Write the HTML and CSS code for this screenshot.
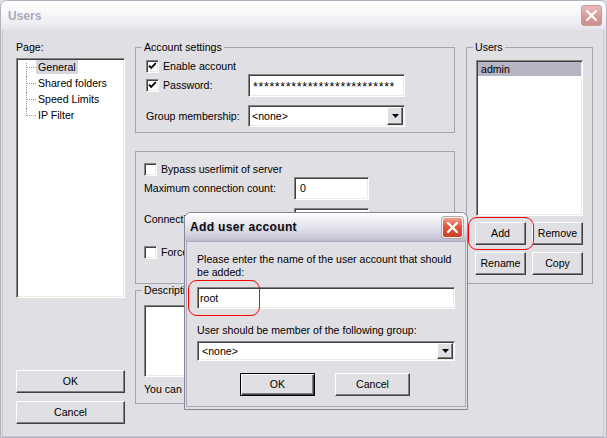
FILE: index.html
```html
<!DOCTYPE html>
<html>
<head>
<meta charset="utf-8">
<title>Users</title>
<link rel="stylesheet" href="styles.css">
</head>
<body>
<div class="win">
  <div class="titlebar">
    <span class="title">Users</span>
    <span class="xbtn xbtn-inactive"><svg width="21" height="21" viewBox="0 0 21 21"><path d="M6 6 L15 15 M15 6 L6 15" stroke="#fff" stroke-width="2.2" stroke-linecap="round"/></svg></span>
  </div>
  <div class="client">
    <div class="col-left">
      <div class="label">Page:</div>
      <div class="tree">
        <div class="node first"><span class="conn"></span><span class="node-text sel">General</span></div>
        <div class="node"><span class="conn"></span><span class="node-text">Shared folders</span></div>
        <div class="node"><span class="conn"></span><span class="node-text">Speed Limits</span></div>
        <div class="node last"><span class="conn"></span><span class="node-text">IP Filter</span></div>
      </div>
      <button class="btn btn-left btn-ok">OK</button>
      <button class="btn btn-left btn-cancel">Cancel</button>
    </div>

    <div class="col-mid">
      <fieldset class="grp g-account">
        <legend>Account settings</legend>
        <div class="grp-in acc-in">
          <div class="row r-enable">
            <span class="chk"><svg width="11" height="11" viewBox="0 0 11 11"><polyline points="2,4.6 4.2,6.8 8.8,2.2" fill="none" stroke="#000" stroke-width="1.9"/></svg></span>
            <span class="chk-text">Enable account</span>
          </div>
          <div class="row r-pass">
            <span class="lblcol">
              <span class="chk"><svg width="11" height="11" viewBox="0 0 11 11"><polyline points="2,4.6 4.2,6.8 8.8,2.2" fill="none" stroke="#000" stroke-width="1.9"/></svg></span>
              <span class="chk-text">Password:</span>
            </span>
            <span class="edit pw">**************************</span>
          </div>
          <div class="row r-group">
            <span class="lblcol">Group membership:</span>
            <span class="combo acc-combo"><span class="combo-text">&lt;none&gt;</span><span class="drop"><svg width="7" height="4" viewBox="0 0 7 4"><polygon points="0,0 7,0 3.5,4" fill="#000"/></svg></span></span>
          </div>
        </div>
      </fieldset>

      <div class="grp g-conn">
        <div class="grp-in conn-in">
          <div class="row r-bypass">
            <span class="chk"></span>
            <span class="chk-text">Bypass userlimit of server</span>
          </div>
          <div class="row r-max">
            <span class="lblcol2">Maximum connection count:</span>
            <span class="edit num">0</span>
          </div>
          <div class="row r-ip">
            <span class="lblcol2">Connection limit per IP:</span>
            <span class="edit num">0</span>
          </div>
          <div class="row r-force">
            <span class="chk"></span>
            <span class="chk-text">Force SSL for user login</span>
          </div>
        </div>
      </div>

      <fieldset class="grp g-desc">
        <legend>Description</legend>
        <div class="grp-in desc-in">
          <div class="memo"></div>
          <div class="desc-note">You can enter some comments about the user</div>
        </div>
      </fieldset>
    </div>

    <div class="col-right">
      <fieldset class="grp g-users">
        <legend>Users</legend>
        <div class="grp-in users-in">
          <div class="listbox">
            <div class="list-item sel-row">admin</div>
          </div>
          <div class="btn-row first-row">
            <button class="btn btn-small">Add</button>
            <button class="btn btn-small">Remove</button>
          </div>
          <div class="btn-row">
            <button class="btn btn-small">Rename</button>
            <button class="btn btn-small">Copy</button>
          </div>
        </div>
      </fieldset>
    </div>
  </div>
</div>

<div class="dlg">
  <div class="dlg-title">
    <span class="dlg-caption">Add user account</span>
    <span class="xbtn xbtn-active"><svg width="21" height="21" viewBox="0 0 21 21"><path d="M6 6 L15 15 M15 6 L6 15" stroke="#fff" stroke-width="2.4" stroke-linecap="round"/></svg></span>
  </div>
  <div class="dlg-body">
    <p class="dlg-text">Please enter the name of the user account that should be added:</p>
    <div class="edit dlg-edit">root</div>
    <p class="dlg-text2">User should be member of the following group:</p>
    <div class="combo dlg-combo"><span class="combo-text">&lt;none&gt;</span><span class="drop"><svg width="7" height="4" viewBox="0 0 7 4"><polygon points="0,0 7,0 3.5,4" fill="#000"/></svg></span></div>
    <div class="dlg-buttons">
      <button class="btn btn-dlg btn-default">OK</button>
      <button class="btn btn-dlg">Cancel</button>
    </div>
  </div>
</div>

<div class="hl hl-add"></div>
<div class="hl hl-root"></div>
</body>
</html>
```

FILE: styles.css
```css
html, body {
  margin: 0;
  padding: 0;
}
body {
  position: relative;
  width: 607px;
  height: 438px;
  overflow: hidden;
  font: 10.6px/13px "Liberation Sans", Arial, sans-serif;
  color: #000;
  background: #e0dfe3;
}

.win {
  width: 607px;
  height: 438px;
  box-sizing: border-box;
  border: 1px solid #b3b2c0;
  border-radius: 7px 7px 0 0;
  background: #e0dfe3;
  display: flex;
  flex-direction: column;
  overflow: hidden;
}

.titlebar {
  height: 29px;
  flex: none;
  display: flex;
  align-items: center;
  padding: 0 4px 0 7px;
  background: linear-gradient(#ffffff, #f7f7f9 45%, #ebebf0 85%, #e3e3e9);
}
.title {
  flex: 1;
  font: bold 12px "Liberation Sans", Arial, sans-serif;
  color: #aaa9b7;
}

.xbtn {
  width: 21px;
  height: 21px;
  box-sizing: border-box;
  border-radius: 3px;
  display: flex;
  align-items: center;
  justify-content: center;
  overflow: hidden;
}
.xbtn svg { display: block; flex: none; }
.xbtn-inactive {
  background: linear-gradient(#ebbcbc, #d99a9a 55%, #cf8d8d);
  border: 1px solid #c99a9a;
}
.xbtn-active {
  background: linear-gradient(#f0a08c, #e0573d 45%, #cc3f28);
  border: 1px solid #f4f0f0;
  box-shadow: 0 0 0 1px #b8a8a8;
}

.client {
  flex: 1;
  margin: 0 2px 0 1px;
  border: 1px solid #c9c8d0;
  border-top: none;
  display: flex;
  align-items: flex-start;
  padding: 11px 0 0 13px;
}

/* ---------- left column ---------- */
.col-left {
  width: 109px;
  flex: none;
  display: flex;
  flex-direction: column;
}
.label {
  height: 13px;
}
.tree {
  margin-top: 4px;
  height: 240px;
  box-sizing: border-box;
  background: #fff;
  border: 1px solid;
  border-color: #858585 #fff #fff #858585;
  box-shadow: inset 1px 1px 0 #404040, inset -1px -1px 0 #ecebe4;
  padding-top: 1px;
}
.node {
  height: 16px;
  display: flex;
  align-items: flex-start;
}
.conn {
  position: relative;
  width: 10px;
  height: 16px;
  margin-left: 9px;
  flex: none;
}
.conn::before {
  content: "";
  position: absolute;
  left: 0;
  top: 0;
  bottom: 0;
  border-left: 1px dotted #9a9a9a;
}
.conn::after {
  content: "";
  position: absolute;
  left: 1px;
  right: 0;
  top: 7px;
  border-top: 1px dotted #9a9a9a;
}
.first .conn::before { top: 3px; }
.last .conn::before { bottom: auto; height: 8px; }
.node-text {
  line-height: 14px;
  padding: 0 2px;
  white-space: nowrap;
}
.node-text.sel { background: #d8d7de; }

.btn {
  font: inherit;
  color: #000;
  margin: 0;
  padding: 0;
  box-sizing: border-box;
  background: #e0dfe3;
  border: 1px solid;
  border-color: #fff #404040 #404040 #fff;
  box-shadow: inset -1px -1px 0 #808080;
  text-align: center;
  line-height: 13px;
}
.btn-left {
  width: 109px;
  height: 23px;
}
.btn-ok { margin-top: 72px; }
.btn-cancel { margin-top: 8px; }

/* ---------- groups ---------- */
fieldset.grp {
  margin: 0;
  padding: 0;
  min-width: 0;
  box-sizing: border-box;
  border: 1px solid #a6a5ad;
}
fieldset.grp legend {
  margin-left: 6px;
  padding: 0 2px;
  line-height: 13px;
  height: 13px;
}
div.grp {
  box-sizing: border-box;
  border: 1px solid #a6a5ad;
}

.col-mid {
  width: 320px;
  flex: none;
  margin-left: 10px;
  display: flex;
  flex-direction: column;
}
.g-account { height: 92px; }
.acc-in { padding-left: 10px; }

.row {
  display: flex;
  align-items: center;
}
.chk {
  width: 13px;
  height: 13px;
  flex: none;
  box-sizing: border-box;
  background: #fff;
  border: 1px solid;
  border-color: #858585 #fff #fff #858585;
  box-shadow: inset 1px 1px 0 #404040, inset -1px -1px 0 #ecebe4;
  display: flex;
  align-items: center;
  justify-content: center;
}
.chk svg { display: block; }
.chk-text { margin-left: 4px; white-space: nowrap; }

.r-enable { margin-top: 6px; height: 13px; }
.r-pass { margin-top: 1px; height: 23px; }
.r-group { margin-top: 8px; height: 22px; }
.lblcol {
  width: 102px;
  flex: none;
  display: flex;
  align-items: center;
  white-space: nowrap;
}

.edit {
  box-sizing: border-box;
  background: #fff;
  border: 1px solid;
  border-color: #858585 #fff #fff #858585;
  box-shadow: inset 1px 1px 0 #404040, inset -1px -1px 0 #ecebe4;
  padding: 0 3px;
  display: flex;
  align-items: center;
  white-space: nowrap;
  overflow: hidden;
}
.pw {
  width: 157px;
  height: 23px;
  padding-left: 4px;
  font-size: 12.5px;
  letter-spacing: 0.6px;
  padding-top: 3px;
}

.combo {
  box-sizing: border-box;
  background: #fff;
  border: 1px solid;
  border-color: #858585 #fff #fff #858585;
  box-shadow: inset 1px 1px 0 #404040, inset -1px -1px 0 #ecebe4;
  padding: 1px;
  display: flex;
  align-items: stretch;
}
.combo-text {
  flex: 1;
  display: flex;
  align-items: center;
  padding-left: 2px;
}
.drop {
  width: 16px;
  flex: none;
  box-sizing: border-box;
  background: #e0dfe3;
  border: 1px solid;
  border-color: #fff #404040 #404040 #fff;
  box-shadow: inset -1px -1px 0 #808080;
  display: flex;
  align-items: center;
  justify-content: center;
}
.drop svg { display: block; }
.acc-combo { width: 157px; height: 22px; }

.g-conn {
  margin-top: 18px;
  height: 133px;
}
.conn-in { padding-left: 8px; }
.r-bypass { margin-top: 11px; height: 13px; }
.r-max { margin-top: 1px; height: 23px; }
.r-ip { margin-top: 8px; height: 23px; }
.r-force { margin-top: 15px; height: 13px; }
.lblcol2 { width: 150px; flex: none; white-space: nowrap; }
.num {
  width: 75px;
  height: 23px;
  padding-left: 5px;
}

.g-desc {
  margin-top: 11px;
  height: 120px;
}
.desc-in { padding-left: 8px; }
.memo {
  margin-top: 8px;
  width: 300px;
  height: 72px;
  box-sizing: border-box;
  background: #fff;
  border: 1px solid;
  border-color: #858585 #fff #fff #858585;
  box-shadow: inset 1px 1px 0 #404040, inset -1px -1px 0 #ecebe4;
}
.desc-note {
  margin-top: 6px;
  white-space: nowrap;
}

/* ---------- right column ---------- */
.col-right {
  width: 127px;
  flex: none;
  margin-left: 11px;
}
.g-users { height: 243px; }
.users-in { padding-left: 9px; }
.listbox {
  margin-top: 6px;
  width: 107px;
  height: 156px;
  box-sizing: border-box;
  background: #fff;
  border: 1px solid;
  border-color: #858585 #fff #fff #858585;
  box-shadow: inset 1px 1px 0 #404040, inset -1px -1px 0 #ecebe4;
  padding: 1px;
}
.list-item {
  line-height: 14px;
  padding-left: 3px;
}
.sel-row { background: #b6b5c4; }
.btn-row {
  display: flex;
  gap: 6px;
  margin-left: -1px;
  margin-top: 7px;
}
.btn-row.first-row { margin-top: 6px; }
.btn-small {
  width: 51px;
  height: 23px;
}

/* ---------- dialog ---------- */
.dlg {
  position: absolute;
  left: 184px;
  top: 212px;
  width: 284px;
  height: 198px;
  box-sizing: border-box;
  border: 1px solid #86869b;
  border-radius: 7px 7px 0 0;
  background: #e0dfe3;
  display: flex;
  flex-direction: column;
  overflow: hidden;
}
.dlg-title {
  height: 28px;
  flex: none;
  display: flex;
  align-items: center;
  padding: 0 4px 0 5px;
  background: linear-gradient(#ffffff, #f1f1f5 25%, #dedee8 60%, #c5c5d5 92%, #b8b8ca);
}
.dlg-caption {
  flex: 1;
  font: bold 12px "Liberation Sans", Arial, sans-serif;
  letter-spacing: 0.35px;
  color: #0c0c10;
  text-shadow: 1px 1px 0 #c9c9d6;
}
.dlg-body {
  flex: 1;
  margin: 0 1px 2px 1px;
  border: 1px solid #a9a9b9;
  padding: 11px 0 0 10px;
}
.dlg-text {
  margin: 0;
  width: 262px;
}
.dlg-edit {
  margin-top: 8px;
  width: 258px;
  height: 22px;
  padding-left: 2px;
}
.dlg-text2 {
  margin: 15px 0 0;
}
.dlg-combo {
  margin-top: 4px;
  width: 258px;
  height: 20px;
}
.dlg-combo .combo-text { padding-left: 3px; }
.dlg-buttons {
  margin-top: 12px;
  margin-left: 43px;
  display: flex;
  gap: 20px;
}
.btn-dlg {
  width: 75px;
  height: 23px;
}
.btn-default {
  border: 1px solid #000;
  box-shadow: inset 1px 1px 0 #fff, inset -1px -1px 0 #404040, inset -2px -2px 0 #808080;
}

/* ---------- red annotations ---------- */
.hl {
  position: absolute;
  box-sizing: border-box;
  border: 1px solid #f00;
  border-radius: 9px;
}
.hl-add {
  left: 468px;
  top: 217px;
  width: 66px;
  height: 33px;
}
.hl-root {
  left: 188px;
  top: 280px;
  width: 72px;
  height: 36px;
}
```
